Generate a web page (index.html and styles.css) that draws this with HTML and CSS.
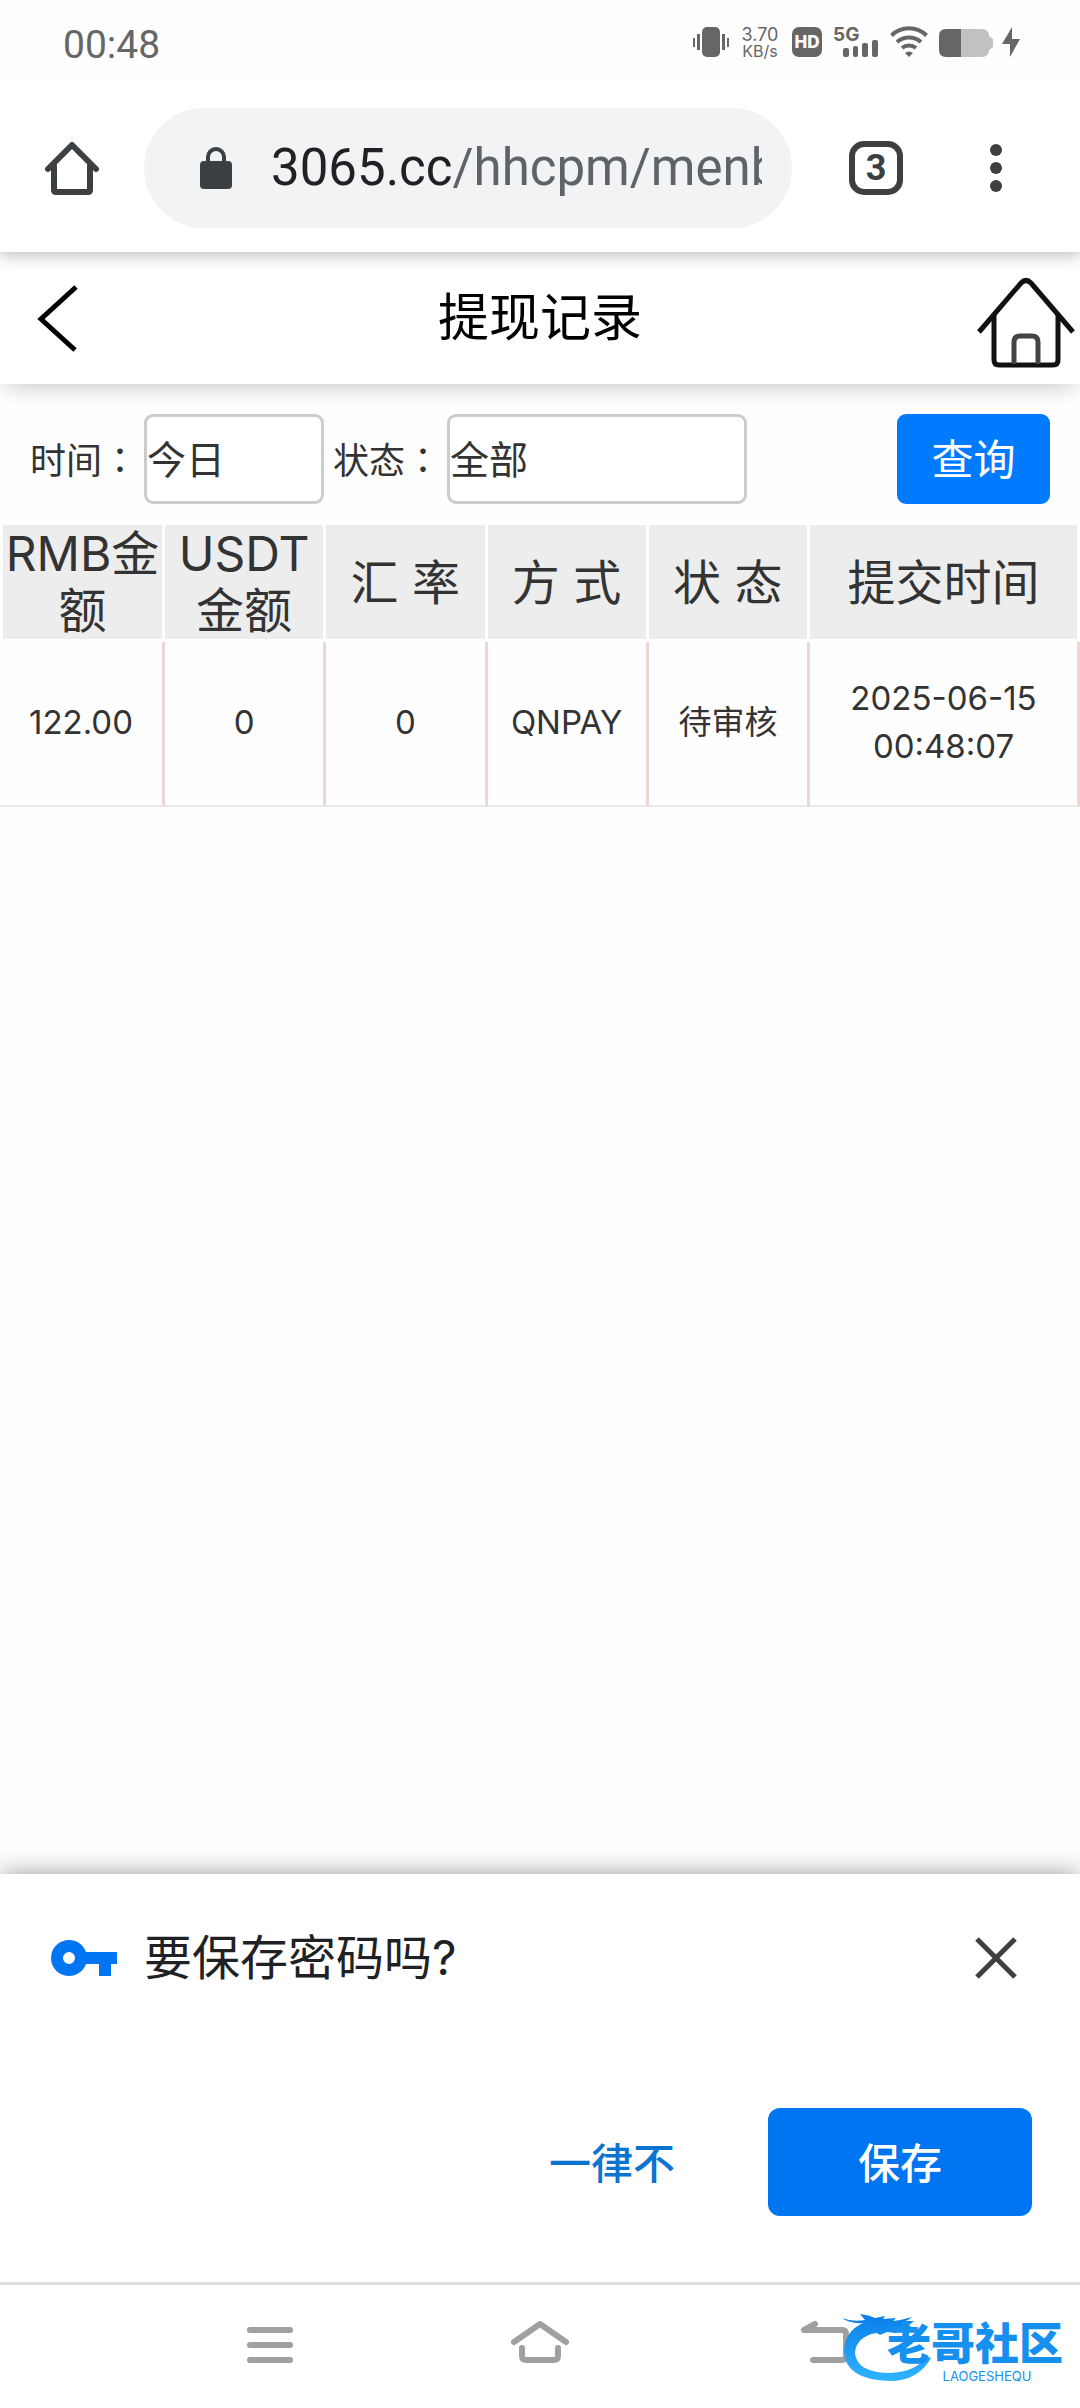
FILE: index.html
```html
<!DOCTYPE html>
<html lang="zh-CN">
<head>
<meta charset="utf-8">
<meta name="viewport" content="width=device-width, initial-scale=1">
<title>提现记录</title>
<link rel="stylesheet" href="styles.css">
</head>
<body>
<div class="status-bar">
  <time class="clock">00:48</time>
  <div class="status-icons">
    <svg width="36" height="30" viewBox="0 0 36 30" fill="#666" aria-hidden="true"><rect x="9" width="18" height="30" rx="5"/><rect y="11" width="2" height="9"/><rect x="4" y="7" width="3" height="16"/><rect x="29" y="7" width="3" height="16"/><rect x="34" y="11" width="2" height="9"/></svg>
    <div class="speed"><span class="speed-value">3.70</span><span class="speed-unit">KB/s</span></div>
    <span class="hd">HD</span>
    <div class="signal">
      <span class="network">5G</span>
      <svg class="bars" width="35" height="17" viewBox="0 0 35 17" fill="#666" aria-hidden="true"><rect y="8" width="6" height="9" rx="2"/><rect x="10" y="6" width="5" height="11" rx="2"/><rect x="19" y="3" width="6" height="14" rx="2"/><rect x="29" width="6" height="17" rx="2"/></svg>
    </div>
    <svg class="wifi" width="38" height="30" viewBox="0 0 38 30" fill="none" stroke="#666" stroke-width="4" aria-hidden="true"><path d="M1.500 8.500a25 25 0 0 1 35 0"/><path d="M7 15a18 18 0 0 1 24 0"/><path d="M12 21a11 11 0 0 1 14 0"/><path d="M15 26q4-3 8 0l-4 4z" fill="#666" stroke="none"/></svg>
    <svg class="battery" width="54" height="28" viewBox="0 0 54 28" aria-hidden="true"><path d="M21 0H43q7 0 7 7l4 3v8l-4 3q0 7-7 7H21z" fill="#c1c1c1"/><path d="M22 0H7Q0 0 0 7v14q0 7 7 7h15z" fill="#666"/></svg>
    <svg width="18" height="30" viewBox="0 0 18 30" fill="#666" aria-hidden="true"><path d="M10 0 0 17h8v13l10-18h-8z"/></svg>
  </div>
</div>

<nav class="toolbar" aria-label="浏览器">
  <button class="icon-button" type="button" aria-label="主页"><svg width="54" height="54" viewBox="0 0 54 54" fill="none" stroke="#3c4043" stroke-width="6" stroke-linecap="round" stroke-linejoin="round"><path d="M3 28 27 4l24 24M9 25v24q0 2 2 2h32q2 0 2-2V25"/></svg></button>
  <button class="address" type="button">
    <svg class="lock" width="32" height="42" viewBox="0 0 32 42" aria-hidden="true"><rect y="14" width="32" height="28" rx="4" fill="#3c4043"/><path d="M8 16v-6a8 8 0 0 1 16 0v6" fill="none" stroke="#3c4043" stroke-width="4"/></svg>
    <span class="url"><span class="host">3065.cc</span>/hhcpm/menb</span>
  </button>
  <button class="tabs" type="button" aria-label="3 个标签页">3</button>
  <button class="icon-button more" type="button" aria-label="更多"><svg width="12" height="50" viewBox="0 0 12 50" fill="#3c4043"><circle cx="6" cy="7" r="6"/><circle cx="6" cy="25" r="6"/><circle cx="6" cy="43" r="6"/></svg></button>
</nav>

<header class="page-header">
  <a class="back" href="#back" aria-label="返回"><svg width="42" height="70" viewBox="0 0 42 70" fill="none" stroke="#000" stroke-width="5"><path d="M40 4 5 36l34 31"/></svg></a>
  <h1 class="title">提现记录</h1>
  <a class="home" href="#home" aria-label="首页"><svg width="96" height="90" viewBox="0 0 96 90" fill="none" stroke="#111" stroke-width="5"><path d="M1 54 43 5q5-5 10 0l42 49"/><path d="M16 37v45q0 5 5 5h54q5 0 5-5V37"/><path d="M36 86V64q0-6 6-6h12q6 0 6 6v22" stroke="#444"/></svg></a>
</header>

<main class="content">
  <form class="filters">
    <label class="label" for="period">时间<span class="colon" lang="zh-TW">：</span></label>
    <select class="field" id="period"><option>今日</option></select>
    <label class="label" for="state">状态<span class="colon" lang="zh-TW">：</span></label>
    <select class="field wide" id="state"><option>全部</option></select>
    <button class="query" type="button">查询</button>
  </form>
  <table class="records">
    <thead>
      <tr><th class="amount">RMB金额</th><th>USDT金额</th><th>汇 率</th><th>方 式</th><th>状 态</th><th class="when">提交时间</th></tr>
    </thead>
    <tbody>
      <tr><td>122.00</td><td>0</td><td>0</td><td>QNPAY</td><td>待审核</td><td>2025-06-15<br>00:48:07</td></tr>
    </tbody>
  </table>
</main>

<section class="sheet" aria-labelledby="save-title">
  <div class="sheet-head">
    <svg class="key" width="66" height="36" viewBox="0 0 66 36" aria-hidden="true"><path fill="#0075f2" fill-rule="evenodd" d="M18 0a18 18 0 0 1 17 12h31v12h-6v12H48V24H35A18 18 0 1 1 18 0zm0 12a6 6 0 1 0 0 12 6 6 0 0 0 0-12z"/></svg>
    <h2 class="sheet-title" id="save-title">要保存密码吗?</h2>
    <button class="close" type="button" aria-label="关闭"><svg width="42" height="42" viewBox="0 0 42 42" stroke="#3c4043" stroke-width="5"><path d="M2 2l38 38M40 2 2 40"/></svg></button>
  </div>
  <div class="sheet-actions">
    <button class="never" type="button">一律不</button>
    <button class="save" type="button">保存</button>
  </div>
</section>

<nav class="system-nav" aria-label="系统">
  <button class="nav-button" type="button" aria-label="最近任务"><svg width="60" height="48" viewBox="0 0 60 48"><path d="M10 9h40M10 24h40M10 39h40"/></svg></button>
  <button class="nav-button" type="button" aria-label="主屏幕"><svg width="60" height="48" viewBox="0 0 60 48"><path d="M4 21 30 3l26 18M12 27v8q0 4 4 4h28q4 0 4-4v-8"/></svg></button>
  <button class="nav-button" type="button" aria-label="返回"><svg width="60" height="48" viewBox="0 0 60 48"><path d="M35 3 24 9h38q4 0 4 4v22q0 4-4 4H33"/></svg></button>
  <div class="brand">
    <svg class="dragon" width="92" height="70" viewBox="0 0 92 70" aria-hidden="true">
      <defs><linearGradient id="blue" x1="0" y1="0" x2="0" y2="1"><stop offset="0" stop-color="#0a7ee8"/><stop offset="1" stop-color="#2fb4ff"/></linearGradient></defs>
      <path fill="url(#blue)" d="M0 4q10 4 23 2L18 0q9 1 15 4l10-2-2 3 13-1-3 3q9-1 19-4-3 3-7 4h9l-5 4 4 4-11 1-7 3-8-1-7 3-3-2-6 1Q13 26 13 40 16 59 48 59 74 58 85 42l4 2Q76 67 48 67 3 66 2 37 3 17 21 9 8 10 0 4z"/>
    </svg>
    <div class="brand-text"><span class="brand-name">老哥社区</span><span class="brand-latin">LAOGESHEQU</span></div>
  </div>
</nav>
</body>
</html>
```
FILE: styles.css
```css
* { box-sizing: border-box; }

body {
  margin: 0;
  min-height: 100vh;
  display: flex;
  flex-direction: column;
  background: #fefefe;
  color: #333;
  font-family: Inter, "Noto Sans CJK SC", sans-serif;
}

button, select {
  margin: 0;
  padding: 0;
  border: 0;
  background: none;
  color: inherit;
  font-family: inherit;
}

svg { display: block; flex: none; overflow: visible; }

/* Status bar */
.status-bar {
  display: flex;
  justify-content: space-between;
  height: 84px;
  padding: 27px 60px 0 63px;
  color: #666;
}
.clock { font-family: Roboto, sans-serif; font-size: 39px; line-height: 36px; }
.status-icons { display: flex; align-items: flex-start; height: 30px; }
.speed {
  display: flex;
  flex-direction: column;
  align-items: center;
  width: 36px;
  margin: 0 14px 0 13px;
  font-size: 16px;
  line-height: 16px;
}
.speed-value { font-size: 18px; }
.hd {
  width: 30px;
  height: 30px;
  border-radius: 7px;
  background: #666;
  color: #fff;
  font-size: 17px;
  font-weight: 800;
  line-height: 30px;
  text-align: center;
}
.signal { width: 45px; height: 30px; margin: 0 12px 0 11px; }
.network { display: block; height: 13px; font-size: 19px; font-weight: 700; line-height: 15px; }
.bars { margin-left: auto; }
.battery { margin: 2px 9px 0 11px; }

/* Browser toolbar */
.toolbar {
  position: relative;
  z-index: 2;
  display: flex;
  align-items: center;
  height: 168px;
  padding: 0 78px 0 45px;
  background: #fff;
  box-shadow: 0 2px 16px rgba(0, 0, 0, .3);
  clip-path: inset(0 0 -24px 0);
}
.icon-button { flex: none; }
.address {
  display: flex;
  align-items: center;
  flex: 1;
  min-width: 0;
  height: 120px;
  margin: 0 57px 0 45px;
  padding: 0 30px 0 56px;
  border-radius: 60px;
  background: #f1f3f4;
}
.lock { margin-right: 39px; }
.url {
  flex: 1;
  overflow: hidden;
  color: #5f6368;
  font-family: Roboto, sans-serif;
  font-size: 51px;
  line-height: 64px;
  text-align: left;
  white-space: nowrap;
}
.host { color: #202124; }
.tabs {
  flex: none;
  width: 54px;
  height: 54px;
  border: 6px solid #3c4043;
  border-radius: 15px;
  color: #3c4043;
  font-family: Roboto, sans-serif;
  font-size: 36px;
  font-weight: 700;
  line-height: 42px;
}
.more { margin-left: 87px; }

/* Page header */
.page-header {
  position: relative;
  z-index: 1;
  display: grid;
  grid-template-columns: 1fr auto 1fr;
  align-items: center;
  height: 132px;
  padding: 0 6px 0 36px;
  background: #fff;
  box-shadow: 0 10px 20px -6px rgba(0, 0, 0, .2);
}
.title {
  margin: 0 30px 0 0;
  color: #000;
  font-size: 51px;
  font-weight: 400;
  line-height: 72px;
}
.home { justify-self: end; padding-top: 9px; }

/* Filters */
.content { flex: 1; }
.filters {
  display: flex;
  align-items: center;
  padding: 30px 30px 18px;
}
.label { margin-right: 6px; font-size: 36px; line-height: 48px; }
.colon { font-family: "Noto Sans CJK TC", sans-serif; }
.field {
  appearance: none;
  width: 180px;
  height: 90px;
  margin-right: 9px;
  border: 3px solid #ccc;
  border-radius: 9px;
  background: #fff;
  font-size: 39px;
}
.wide { width: 300px; }
.query {
  width: 153px;
  height: 90px;
  margin-left: auto;
  padding-bottom: 6px;
  border-radius: 9px;
  background: #007bff;
  color: #fff;
  font-size: 42px;
}

/* Records */
.records {
  width: 100%;
  table-layout: fixed;
  border-collapse: separate;
  border-spacing: 0;
  text-align: center;
}
.records th {
  height: 120px;
  padding: 0;
  border: 3px solid #fff;
  border-left-width: 0;
  background: #ededed;
  font-size: 48px;
  font-weight: 400;
  line-height: 57px;
}
.records th:first-child { border-left-width: 3px; }
.amount { width: 165px; }
.when { width: 25%; }
.records td {
  height: 165px;
  padding: 0 0 3px;
  border-right: 3px solid #efd6d6;
  border-bottom: 2px solid #e8e8e8;
  font-size: 33px;
  line-height: 48px;
}

/* Save-password sheet */
.sheet {
  padding: 42px 48px 66px 51px;
  background: #fff;
  box-shadow: 0 0 24px rgba(0, 0, 0, .4);
  clip-path: inset(-30px 0 0 0);
}
.sheet-head { display: flex; align-items: center; height: 84px; }
.sheet-title {
  flex: 1;
  margin: 0 0 0 27px;
  color: #202124;
  font-size: 48px;
  font-weight: 400;
  line-height: 72px;
}
.close { margin-right: 15px; }
.sheet-actions {
  display: flex;
  justify-content: flex-end;
  gap: 93px;
  margin-top: 108px;
}
.never, .save { height: 108px; padding-bottom: 3px; font-size: 42px; font-weight: 500; }
.never { color: #0b73d0; }
.save {
  width: 264px;
  border-radius: 12px;
  background: #0075f2;
  color: #fff;
}

/* System navigation */
.system-nav {
  position: relative;
  display: flex;
  justify-content: center;
  align-items: flex-start;
  gap: 210px;
  height: 126px;
  padding-top: 36px;
  border-top: 3px solid #ddd;
  background: #fff;
}
.nav-button {
  fill: none;
  stroke: #a0a0a0;
  stroke-width: 6px;
  stroke-linecap: round;
  stroke-linejoin: round;
}
.brand {
  position: absolute;
  right: 17px;
  bottom: 24px;
  display: flex;
}
.dragon { margin-right: -47px; }
.brand-text {
  display: flex;
  flex-direction: column;
  align-items: center;
  padding-top: 6px;
  color: #1690ef;
}
.brand-name { font-size: 44px; font-weight: 900; line-height: 48px; }
.brand-latin { margin-left: 24px; font-size: 13px; line-height: 16px; }
```
